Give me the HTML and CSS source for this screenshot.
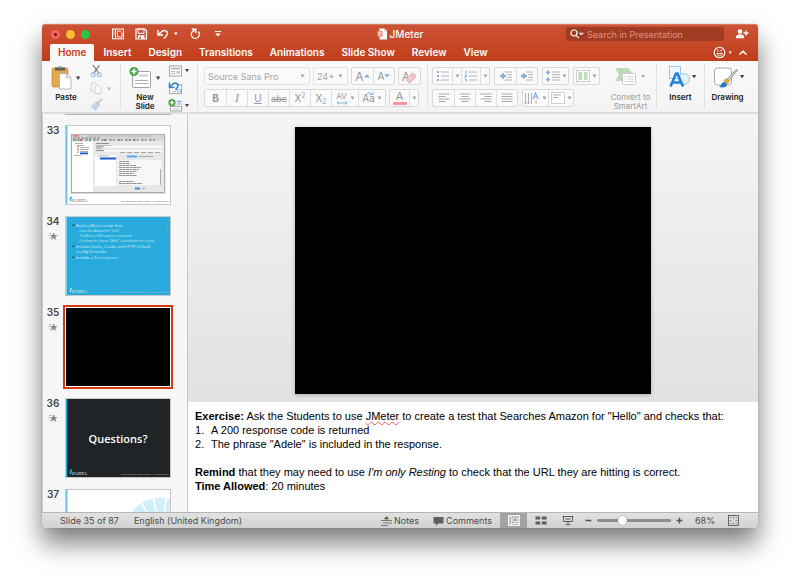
FILE: index.html
```html
<!DOCTYPE html>
<html lang="en">
<head>
<meta charset="utf-8">
<title>JMeter</title>
<link rel="stylesheet" href="styles.css">
</head>
<body>
<svg class="defs" aria-hidden="true">
  <symbol id="caret" viewBox="0 0 5 4"><path d="M0.4 0.5h4.2L2.5 3.8z" fill="currentColor"/></symbol>
  <symbol id="star" viewBox="0 0 10 9"><path d="M5.6 0.3l1 2.7h3L7.3 4.8l.9 3.1-2.6-1.8L3 7.9l.9-3.1L2.2 3.4 4.6 3z" fill="currentColor"/><path d="M1 1.5h2.5M0.5 3.5h1.8M1.2 6h1.6" stroke="currentColor" stroke-width=".6"/></symbol>
</svg>
<div class="window">
  <header class="chrome">
    <div class="titlebar">
      <div class="title-left">
        <div class="lights">
          <button class="light red" aria-label="Close"></button>
          <button class="light yellow" aria-label="Minimise"></button>
          <button class="light green" aria-label="Zoom"></button>
        </div>
        <button class="tool" aria-label="Layout"><svg width="14" height="12"><rect x="1.5" y="1" width="11" height="9.8" fill="none" stroke="#fff"/><path d="M4.5 1v10M2.5 3h1M2.5 5h1M2.5 7h1" stroke="#fff"/><path d="M6.5 3h2.8l1.7 1.7V9H6.5z" fill="none" stroke="#fff" stroke-width=".9"/></svg></button>
        <button class="tool" aria-label="Save"><svg width="14" height="12"><path d="M2 1h9l1.5 1.5V11H2z" fill="none" stroke="#fff" stroke-width="1.2"/><path d="M4 1h6v4.3H4z" fill="none" stroke="#fff"/><path d="M4 7.2h6.5V11H4z" fill="#fff"/><path d="M5.5 8.5h1.3V11H5.500z" fill="#c24a2a"/></svg></button>
        <button class="tool undo" aria-label="Undo"><svg width="22" height="12"><path d="M1 2v5h5M1.3 6.700L4.800 3.500c2-1.800 5.500-1 5.700 1.800 0 2-1.500 3-3.700 5.200" fill="none" stroke="#fff" stroke-width="1.400"/><path d="M17 4.500h3.700l-1.800 2.800z" fill="#fff"/></svg></button>
        <button class="tool" aria-label="Redo"><svg width="14" height="12"><path d="M10.200 3.600a4 4 0 1 1-6 .3L7.400 1.600" fill="none" stroke="#fff" stroke-width="1.400"/><path d="M3.800 1.300h4v4" fill="none" stroke="#fff" stroke-width="1.400"/></svg></button>
        <button class="tool" aria-label="Customise toolbar"><svg width="14" height="12"><path d="M4 3.500h6" stroke="#fff"/><path d="M4.200 5.500h5.600L7 8.500z" fill="#fff"/></svg></button>
      </div>
      <h1 class="title"><svg width="11" height="12"><path d="M2.500.5h5L10 3v8.500H2.500z" fill="#fff"/><path d="M7.500.5V3H10" fill="none" stroke="#d0a090" stroke-width=".6"/><rect x="0" y="3" width="5.500" height="5.500" fill="#e9866e"/><path d="M2 8V4.200h1.200a1 1 0 0 1 0 2.100H2" fill="none" stroke="#fff" stroke-width=".8"/></svg>JMeter</h1>
      <div class="title-right">
        <label class="search"><svg width="15" height="12"><circle cx="5" cy="5" r="3" fill="none" stroke="#fff" stroke-width="1.200"/><path d="M7.200 7.300l2.700 2.900M10.500 4.800l1.800 1.600 1.800-1.600" fill="none" stroke="#fff" stroke-width="1.200"/></svg><input type="search" placeholder="Search in Presentation" aria-label="Search in Presentation"></label>
        <button class="tool share" aria-label="Share"><svg width="14" height="12"><circle cx="5" cy="3.500" r="2.300" fill="#fff"/><path d="M.8 10.200c0-3 1.500-4 4.200-4s4.200 1 4.200 4z" fill="#fff"/><path d="M11 2.500v5M8.500 5h5" stroke="#fff" stroke-width="1.300"/></svg></button>
      </div>
    </div>
    <nav class="tabs">
      <button class="tab active">Home</button>
      <button class="tab">Insert</button>
      <button class="tab">Design</button>
      <button class="tab">Transitions</button>
      <button class="tab">Animations</button>
      <button class="tab">Slide Show</button>
      <button class="tab">Review</button>
      <button class="tab">View</button>
      <button class="tool feedback" aria-label="Feedback"><svg width="20" height="13"><circle cx="6.500" cy="6.500" r="5.300" fill="none" stroke="#fff" stroke-width="1.100"/><path d="M3.800 7.500h5.400c-.5 3.200-4.900 3.200-5.400 0M4.800 3.500v2M8.200 3.500v2" fill="none" stroke="#fff"/><path d="M15.500 5.500H19l-1.700 2.500z" fill="#fff"/></svg></button>
      <button class="tool collapse" aria-label="Collapse ribbon"><svg width="10" height="13"><path d="M1.500 8.500L5 5.300l3.500 3.200" fill="none" stroke="#fff" stroke-width="1.600"/></svg></button>
    </nav>
  </header>

  <section class="ribbon" aria-label="Home ribbon">
    <div class="group clipboard">
      <button class="big"><svg width="32" height="26"><rect x="2" y="4" width="16" height="19" rx="1.500" fill="#e3a851" stroke="#c98e3d" stroke-width=".7"/><path d="M5 5.500V3.500h3a2.200 2.200 0 0 1 4.200 0h3v3H5z" fill="#5d6063"/><circle cx="10" cy="3.300" r=".8" fill="#fff"/><path d="M9.500 9.500h7l4.500 4.200V25H9.500z" fill="#fff" stroke="#a5a9ad" stroke-width=".8"/><path d="M16.500 9.500v4.200H21" fill="#eee" stroke="#a5a9ad" stroke-width=".8"/><path d="M26 12.500h4.200L28.100 16z" fill="#444"/></svg><span>Paste</span></button>
      <div class="stack">
        <button aria-label="Cut"><svg width="24" height="14"><path d="M3 1l6 8.500M9.500 1l-6 8.500" stroke="#74787c" stroke-width="1.300"/><circle cx="3.200" cy="10.600" r="2" fill="none" stroke="#9cbfe4" stroke-width="1.200"/><circle cx="9.300" cy="10.600" r="2" fill="none" stroke="#9cbfe4" stroke-width="1.200"/></svg></button>
        <button aria-label="Copy"><svg width="24" height="14"><path d="M1.500 2h4l2 2v6.500h-6z" fill="#fafafa" stroke="#d2d2d2"/><path d="M5 4.500h3.500L11 7v5.500H5z" fill="#fafafa" stroke="#d2d2d2"/><path d="M17 6.500h4L19 9.500z" fill="#b8b8b8"/></svg></button>
        <button aria-label="Format painter"><svg width="24" height="14"><path d="M12 1L7.500 5.500" stroke="#c9cdd0" stroke-width="2.400"/><path d="M5.500 4l4 4" stroke="#bfc3c6" stroke-width="2"/><path d="M4.500 5l4.200 4.200L5.500 13 .8 8.200z" fill="#bdd5ea"/></svg></button>
      </div>
    </div>
    <div class="group slides">
      <button class="big"><svg width="34" height="26"><rect x="4.500" y="7.500" width="18" height="16" rx=".8" fill="#fff" stroke="#9da3a8"/><path d="M7 16.500h13M7 19.500h13" stroke="#a9b2bd" stroke-width="1.200"/><path d="M11 11.500h9" stroke="#ccd0d4" stroke-width="2"/><circle cx="6" cy="7.500" r="4.600" fill="#4aa74b"/><path d="M6 4.800v5.400M3.300 7.500h5.400" stroke="#fff" stroke-width="1.500"/><path d="M28 12.500h4.200L30.100 16z" fill="#444"/></svg><span>New<br>Slide</span></button>
      <div class="stack">
        <button aria-label="Layout"><svg width="22" height="14"><rect x="1.500" y="2" width="12" height="10" fill="#fff" stroke="#a1a7ac"/><path d="M3 4.500h9" stroke="#a9afb5" stroke-width="1.600"/><path d="M3 7.500h4M3 9.500h4" stroke="#b8bdc2"/><path d="M8.500 7h3.500v3H8.500z" fill="#c8ccd0"/><path d="M17 5h4l-2 3.200z" fill="#444"/></svg></button>
        <button aria-label="Reset"><svg width="22" height="14"><path d="M8 3.500h5.500v9h-12V8" fill="#fff" stroke="#a1a7ac"/><path d="M4 10.500h4M9.500 8.500h3v2.500h-3z" stroke="#b5bac0" fill="none"/><path d="M1.500 1.500v5h5M2 6l3-3C7.500 1 11.500 3 9.500 6.300L7.500 9" fill="none" stroke="#2f7fcb" stroke-width="1.500"/></svg></button>
        <button aria-label="Section"><svg width="22" height="14"><path d="M9 3.500h4.500" stroke="#7fa9d6" stroke-width="1.300"/><path d="M9 6h4.500" stroke="#7fa9d6"/><rect x="2.500" y="8.500" width="11" height="4.500" fill="#fff" stroke="#a1a7ac"/><path d="M4.500 11h7" stroke="#b5bac0"/><circle cx="4" cy="4.700" r="3.600" fill="#4aa74b"/><path d="M4 2.600v4.200M1.900 4.700h4.200" stroke="#fff" stroke-width="1.200"/><path d="M17 6h4l-2 3.200z" fill="#444"/></svg></button>
      </div>
    </div>
    <div class="group font disabled">
      <div class="row">
        <div class="combo name"><select aria-label="Font"><option>Source Sans Pro</option></select><svg class="caret"><use href="#caret"/></svg></div>
        <div class="combo size"><select aria-label="Font size"><option>24+</option></select><svg class="caret"><use href="#caret"/></svg></div>
        <div class="segments">
          <button class="w22 letter">A<svg width="6" height="4"><path d="M0 3.500h6L3 .3z" fill="#86aed8"/></svg></button>
          <button class="w22 letter small">A<svg width="6" height="4"><path d="M0 .3h6L3 3.500z" fill="#86aed8"/></svg></button>
        </div>
        <div class="segments"><button class="w22 letter" aria-label="Clear formatting">A<svg class="eraser" width="12" height="12"><path d="M6.500 1.500q1-1 2 0l2 2q1 1 0 2L5.500 10.500q-1 1-2 0l-2-2q-1-1 0-2z" fill="#eec3cb" stroke="#d9a9b2" stroke-width=".8"/><path d="M3.500 4.500l4 4" stroke="#f8e6e9"/></svg></button></div>
      </div>
      <div class="row">
        <div class="segments">
          <button class="w22"><b>B</b></button>
          <button class="w22"><i class="serif">I</i></button>
          <button class="w22"><u>U</u></button>
          <button class="w22 strike"><s>abc</s></button>
          <button class="w22">X<sup>2</sup></button>
          <button class="w22">X<sub>2</sub></button>
          <button class="w27" aria-label="Character spacing"><span class="spacing">AV<svg width="12" height="4"><path d="M1 2h10M3 .3L1 2l2 1.700M9 .3L11 2 9 3.700" fill="none" stroke="#86aed8"/></svg></span><svg class="caret"><use href="#caret"/></svg></button>
          <button class="w27">Aa<svg class="caret"><use href="#caret"/></svg><svg class="swap" width="9" height="5"><path d="M1 4C2 0 6 0 7 3M5 2.500h3V0" fill="none" stroke="#86aed8"/></svg></button>
        </div>
        <div class="segments color">
          <button class="w19"><span class="ink">A</span></button>
          <button class="w9" aria-label="Font colour options"><svg class="caret"><use href="#caret"/></svg></button>
        </div>
      </div>
    </div>
    <div class="group paragraph disabled">
      <div class="row">
        <div class="segments">
          <button class="w19" aria-label="Bullets"><svg width="14" height="12"><path d="M5 2h8M5 6h8M5 10h8" stroke="#b4b4b4"/><path d="M1 2h2M1 6h2M1 10h2" stroke="#86aed8" stroke-width="2"/></svg></button>
          <button class="w9" aria-label="Bullet options"><svg class="caret"><use href="#caret"/></svg></button>
          <button class="w19" aria-label="Numbering"><svg width="14" height="12"><path d="M5 2h8M5 6h8M5 10h8" stroke="#b4b4b4"/><path d="M2 .5v3M1 5h1.500v1.500H1V8M1 9.500h1.500V12" fill="none" stroke="#86aed8"/></svg></button>
          <button class="w9" aria-label="Numbering options"><svg class="caret"><use href="#caret"/></svg></button>
        </div>
        <div class="segments">
          <button class="w22" aria-label="Decrease indent"><svg width="14" height="12"><path d="M6 2h7M8 4.700h5M8 7.300h5M6 10h7" stroke="#b4b4b4"/><path d="M.5 6L5 2.500v2.300h2v2.400H5v2.300z" fill="#86aed8"/></svg></button>
          <button class="w22" aria-label="Increase indent"><svg width="14" height="12"><path d="M6 2h7M8 4.700h5M8 7.300h5M6 10h7" stroke="#b4b4b4"/><path d="M7.500 6L3 2.500v2.300H1v2.400h2v2.300z" fill="#86aed8"/></svg></button>
        </div>
        <div class="segments"><button class="w25" aria-label="Line spacing"><svg width="15" height="12"><path d="M7 2h8M7 4.700h8M7 7.300h8M7 10h8" stroke="#b4b4b4"/><path d="M3 0l2.500 3H4v1.500H2V3H.5zM3 12L.5 9H2V7.500h2V9h1.500z" fill="#86aed8"/></svg><svg class="caret"><use href="#caret"/></svg></button></div>
        <div class="segments"><button class="w25" aria-label="Columns"><svg width="14" height="12"><rect x=".5" y=".5" width="13" height="11" fill="#fff" stroke="#cdcdcd"/><path d="M2.500 2h3.500v8H2.500zM8 2h3.500v8H8z" fill="#bfdcba"/></svg><svg class="caret"><use href="#caret"/></svg></button></div>
      </div>
      <div class="row">
        <div class="segments">
          <button class="w22" aria-label="Align left"><svg width="12" height="10"><path d="M.5 1h11M.5 3.500h7M.5 6h11M.5 8.500h7" stroke="#a9a9a9"/></svg></button>
          <button class="w22" aria-label="Centre"><svg width="12" height="10"><path d="M.5 1h11M2.500 3.500h7M.5 6h11M2.500 8.500h7" stroke="#a9a9a9"/></svg></button>
          <button class="w22" aria-label="Align right"><svg width="12" height="10"><path d="M.5 1h11M4.500 3.500h7M.5 6h11M4.500 8.500h7" stroke="#a9a9a9"/></svg></button>
          <button class="w22" aria-label="Justify"><svg width="12" height="10"><path d="M.5 1h11M.5 3.500h11M.5 6h11M.5 8.500h11" stroke="#a9a9a9"/></svg></button>
        </div>
        <div class="segments">
          <button class="w25" aria-label="Text direction"><svg width="16" height="13"><path d="M1.500 1v11M4.500 1v11M7.500 1v11M12 8v4" stroke="#b0b0b0"/><path d="M.3 10.500l1.200 1.500 1.200-1.500M3.300 10.500l1.200 1.500 1.200-1.500" fill="none" stroke="#b0b0b0" stroke-width=".7"/><path d="M9 7L11.500 1 14 7M10 5h3" fill="none" stroke="#86aed8" stroke-width="1.200"/></svg><svg class="caret"><use href="#caret"/></svg></button>
          <button class="w25" aria-label="Align text"><svg width="14" height="12"><rect x=".5" y=".5" width="13" height="11" fill="#fff" stroke="#cdcdcd"/><path d="M2 3h8M2 5.500h5" stroke="#b0b0b0"/></svg><svg class="caret"><use href="#caret"/></svg></button>
        </div>
      </div>
    </div>
    <div class="group convert">
      <button class="big muted"><svg width="34" height="26"><path d="M1 4h13l6 6.500-4 6.500H1l4-6.500z" fill="#bedcb9"/><rect x="8.500" y="9.500" width="13" height="11" rx=".8" fill="#fff" stroke="#c7cbce"/><path d="M10.500 12.500h1M10.500 15h1M10.500 17.500h1M13 12.500h6.500M13 15h6.500M13 17.500h6.500" stroke="#c9ccd0"/><path d="M27 11h4.200L29.100 14.500z" fill="#b4b4b4"/></svg><span>Convert to<br>SmartArt</span></button>
    </div>
    <div class="group insert">
      <button class="big"><svg width="34" height="26"><rect x="5.500" y="2.500" width="11" height="12" fill="#eef6fd" stroke="#9cc7ec"/><circle cx="20" cy="15" r="5.500" fill="#e3f1fc" stroke="#9cc7ec"/><path d="M6.500 22.500L12 9.500h1.500l5.500 13M8.700 18.500h8" fill="none" stroke="#2483d6" stroke-width="2.600"/><path d="M28 11h4.200L30.100 14.500z" fill="#444"/></svg><span>Insert</span></button>
    </div>
    <div class="group drawing">
      <button class="big"><svg width="34" height="26"><rect x="3.500" y="4" width="17" height="17" rx="3" fill="#fff" stroke="#a6abb0"/><path d="M26.500 6l-9 11.500-2-2L25.500 5.500z" fill="#d5d8da" stroke="#868b90" stroke-width=".9"/><circle cx="15.500" cy="17.500" r="2.800" fill="#dfa34e"/><path d="M8 22.800c2.500-.5 1.500-4.300 5.500-4.800l2.700 2.700c-1 3-5 3.300-8.200 2.100z" fill="#2876bd"/><path d="M29 11h4.200L31.100 14.500z" fill="#444"/></svg><span>Drawing</span></button>
    </div>
  </section>

  <main class="workspace">
    <aside class="slides-pane">
      <div class="previous-edge"></div>
      <ol class="thumbs">
        <li><div class="meta">33</div>
          <button class="thumb" aria-label="Slide 33"><svg viewBox="0 0 104 78">
            <rect width="104" height="78" fill="#fff"/><rect width="1.500" height="78" fill="#6cc5ea"/>
            <rect x="4.500" y="9.500" width="95" height="58.500" fill="#aaa" opacity=".45"/><rect x="5.500" y="8.500" width="93" height="58" fill="#e8e8e8" stroke="#888" stroke-width=".6"/>
            <rect x="6" y="9" width="92" height="5.500" fill="#d6d6d6"/><path d="M7 9.800h6" stroke="#e2766b" stroke-width="1.200"/><path d="M22 10h64" stroke="#aaa" stroke-width=".7" stroke-dasharray="3 .6"/>
            <path d="M7 12h28" stroke="#777" stroke-width=".9" stroke-dasharray="3 1"/><path d="M7 14h82" stroke="#777" stroke-width="1.600" stroke-dasharray="1.500 3 2 1.500"/><path d="M9 14h72" stroke="#4aa05e" stroke-width="1.500" stroke-dasharray="1.500 13"/><path d="M14 14h72" stroke="#cc4444" stroke-width="1.500" stroke-dasharray="1.500 23"/>
            <path d="M6 16h21v50H6z" fill="#fff"/><path d="M9 17.500h8M11 19.500h7M14 21.500h9M14 23.500h9M14 25.500h8M8 29.500h7" stroke="#8c8c8c" stroke-width=".7"/><path d="M12 20v7" stroke="#d34c4c" stroke-width="1.200" stroke-dasharray="1.300 .8"/><rect x="14" y="26.500" width="8" height="1.800" fill="#1859d8"/>
            <path d="M30 17.500h13M30 20h15M30 22h6M30 24.500h12" stroke="#777" stroke-width=".8"/><path d="M38 20h59v1.500H38zM38 24h59v1.500H38z" fill="#fff"/><path d="M54 26.500h42" stroke="#888" stroke-width=".7" stroke-dasharray="5 2"/>
            <rect x="29" y="29" width="21" height="31" fill="#fff"/><path d="M32 30h11" stroke="#999" stroke-width=".7"/><rect x="34" y="31.500" width="16" height="2" fill="#1859d8"/><rect x="61" y="29.500" width="10" height="2" fill="#5aa5ee"/><path d="M73 30.500h14" stroke="#888" stroke-width=".7"/>
            <rect x="51.500" y="34" width="44" height="25" fill="#f7f7f7"/><path d="M53 35.500h10M53 37.500h11M53 39.500h17M53 41.500h22M53 43.500h20M53 45.500h18M53 47.500h15M53 49.500h18M53 55.500h15M53 57.500h23" stroke="#777" stroke-width=".8" stroke-dasharray="3 .5"/><path d="M94.500 43v16" stroke="#aaa"/><path d="M69 62.500h5" stroke="#388bea" stroke-width="2"/><path d="M76 62.500h3" stroke="#aaa"/>
            <path d="M5 75a2.500 2.500 0 0 1 1-4" stroke="#27aee0" stroke-width="1.500" fill="none"/><text x="6" y="76" class="logo dark">PARTA</text><text x="55" y="76" class="fine dark">Copyright Sparta Global Limited. All rights reserved</text>
          </svg></button></li>
        <li><div class="meta">34<svg class="star"><use href="#star"/></svg></div>
          <button class="thumb" aria-label="Slide 34"><svg viewBox="0 0 104 78">
            <rect width="104" height="78" fill="#28abdc"/><rect width="1" height="78" fill="#7cd0ee"/>
            <path d="M6 8l1 1 1.500-2M6 29l1 1 1.500-2M6 40l1 1 1.500-2" fill="none" stroke="#174a5e" stroke-width=".9"/>
            <g class="lines"><text x="10" y="9.500">Build a JMeter script that:</text><text x="10" y="30.500">Include Cache, Cookie and HTTP Default</text><text x="10" y="35.500">Config Elements</text><text x="10" y="42">Include a Tree Listener</text></g>
            <g class="sub"><text x="12" y="14.500">– Searches Amazon for “Hello”</text><text x="12" y="19.500">– Confirms a 200 response is returned</text><text x="12" y="24.500">– Confirms the phrase “Adele” is included in the results.</text></g>
            <text transform="translate(101 16) rotate(-90)" class="fine">EXERCISE</text>
            <path d="M5 75a2.500 2.500 0 0 1 1-4" stroke="#fff" fill="none"/><text x="6" y="76" class="logo">PARTA</text><text x="55" y="76" class="fine">Copyright Sparta Global Limited. All rights reserved</text>
          </svg></button></li>
        <li><div class="meta">35<svg class="star"><use href="#star"/></svg></div>
          <button class="thumb selected" aria-label="Slide 35"><svg viewBox="0 0 104 78"><rect width="104" height="78"/></svg></button></li>
        <li><div class="meta">36<svg class="star"><use href="#star"/></svg></div>
          <button class="thumb" aria-label="Slide 36"><svg viewBox="0 0 104 78">
            <rect width="104" height="78" fill="#202427"/><rect width="1.200" height="78" fill="#1eb8d4"/><text x="52" y="43.500" class="question">Questions?</text>
            <path d="M5 75a2.500 2.500 0 0 1 1-4" stroke="#27c0e0" stroke-width="1.500" fill="none"/><text x="6" y="76" class="logo">PARTA</text><text x="55" y="76" class="fine">Copyright Sparta Global Limited. All rights reserved</text>
          </svg></button></li>
        <li><div class="meta">37</div>
          <button class="thumb" aria-label="Slide 37"><svg viewBox="0 0 104 78">
            <rect width="104" height="78" fill="#fff"/><rect width="1.500" height="78" fill="#6cc5ea"/>
            <circle cx="95" cy="45" r="29" fill="none" stroke="#d1eff8" stroke-width="17" stroke-dasharray="8.600 1.500"/>
          </svg></button></li>
      </ol>
    </aside>
    <div class="editor">
      <div class="canvas"><div class="slide" role="img" aria-label="Current slide"></div></div>
      <article class="notes">
        <p><b>Exercise:</b> Ask the Students to use <span class="typo">JMeter</span> to create a test that Searches Amazon for "Hello" and checks that:</p>
        <ol><li>A 200 response code is returned</li><li>The phrase "Adele" is included in the response.</li></ol>
        <p class="spaced"><b>Remind</b> that they may need to use <i>I'm only Resting</i> to check that the URL they are hitting is correct.</p>
        <p><b>Time Allowed</b>: 20 minutes</p>
      </article>
    </div>
  </main>

  <footer class="status">
    <span>Slide 35 of 87</span>
    <button class="language">English (United Kingdom)</button>
    <button class="notes-toggle"><svg width="11" height="10"><path d="M3.500 3L5.500.5 7.500 3zM0 4.500h11M2 7h9M0 9.500h7" fill="#606060" stroke="#606060" stroke-width=".8"/></svg>Notes</button>
    <button class="comments"><svg width="11" height="10"><path d="M.5 1h10v6.500H5.500L3 9.700V7.500H.5z" fill="#606060"/></svg>Comments</button>
    <button class="view active" aria-label="Normal view"><svg width="12" height="11"><rect x=".7" y=".7" width="10.600" height="9.600" fill="none" stroke="#fff" stroke-width="1.200"/><path d="M3.200 1v9.500M3.200 8.300h8" stroke="#fff"/><rect x="5" y="3" width="4.500" height="3.500" fill="none" stroke="#fff" stroke-width=".9"/></svg></button>
    <button class="view" aria-label="Slide sorter"><svg width="12" height="11"><path d="M.5 1.500h4.800v3H.5zM6.800 1.500h4.800v3H6.800zM.5 6.500h4.800v3H.5zM6.800 6.500h4.800v3H6.800z" fill="#5c5c5c"/></svg></button>
    <button class="view" aria-label="Slide show"><svg width="12" height="11"><path d="M.5 1.500h11M1.500 1.500v5h9v-5M6 6.500v3M3.500 9.700h5M3.500 4h5" fill="none" stroke="#5c5c5c"/></svg></button>
    <div class="zoom">
      <button aria-label="Zoom out"><svg width="7" height="7"><path d="M.5 3.500h6" stroke="#555" stroke-width="1.400"/></svg></button>
      <input type="range" min="0" max="100" value="33" aria-label="Zoom">
      <button aria-label="Zoom in"><svg width="7" height="7"><path d="M.5 3.500h6M3.500.5v6" stroke="#555" stroke-width="1.400"/></svg></button>
    </div>
    <span class="percent">68%</span>
    <button class="fit" aria-label="Fit slide"><svg width="11" height="11"><rect x=".5" y=".5" width="10" height="10" fill="none" stroke="#666"/><path d="M5.500 1.500v2M5.500 7.500v2M1.500 5.500h2M7.500 5.500h2M2.500 3.500v-1h1M7.500 2.500h1v1M2.500 7.500v1h1M8.500 7.500v1h-1" fill="none" stroke="#777" stroke-width=".8"/></svg></button>
  </footer>
</div>
</body>
</html>
```
FILE: styles.css
```css
* { box-sizing: border-box; }
body {
  margin: 0;
  min-height: 100vh;
  padding: 24px 42px 60px;
  display: flex;
  background: #fff;
  font: 10px/13px Inter, "Liberation Sans", sans-serif;
  color: #222;
}
button, select, input { font: inherit; color: inherit; }
button { border: 0; padding: 0; background: none; }
svg { display: block; flex: none; }
.defs { position: absolute; width: 0; height: 0; }
.caret { width: 5px; height: 4px; color: #a6a6a6; }

.window {
  flex: 1;
  min-width: 0;
  height: calc(100vh - 84px);
  display: flex;
  flex-direction: column;
  overflow: hidden;
  border-radius: 4px;
  background: #f6f6f6;
  box-shadow: 0 0 1px rgba(0, 0, 0, .5), 0 15px 26px rgba(0, 0, 0, .52);
}

.chrome {
  flex: none;
  background: linear-gradient(#cc5335, #c13e1b);
  color: #fff;
  box-shadow: inset 0 1px #d77861;
}
.titlebar {
  height: 20px;
  display: grid;
  grid-template-columns: 1fr auto 1fr;
  align-items: center;
}
.title-left { display: flex; align-items: center; gap: 9px; padding-left: 9px; }
.lights { display: flex; gap: 6px; margin-right: 12px; }
.light { width: 9px; height: 9px; border-radius: 50%; }
.red { background: radial-gradient(circle, #6d1410 1px, #f9615a 2px); }
.yellow { background: #fcbd30; }
.green { background: #27c840; }
.title { margin: 0; display: flex; align-items: center; gap: 2px; font-size: 10px; font-weight: 500; }
.title-right { display: flex; align-items: center; justify-content: flex-end; gap: 11px; padding-right: 9px; }
.search {
  width: 158px;
  height: 14px;
  display: flex;
  align-items: center;
  padding-left: 3px;
  gap: 3px;
  border-radius: 2px;
  background: #a13b23;
  font-size: 9px;
}
.search input { flex: 1; min-width: 0; border: 0; padding: 0; background: none; outline: 0; }
.search input::placeholder { color: #e1917f; opacity: 1; }
.tabs { height: 17px; display: flex; align-items: stretch; gap: 1px; padding: 0 10px 0 8px; }
.tab { padding: 0 8px; font-size: 10px; font-weight: 600; }
.tab.active { background: #f9f9f9; color: #c93a18; border-radius: 2px 2px 0 0; }
.feedback { margin-left: auto; }
.collapse { margin-left: 4px; }
.tabs .tool { align-self: center; }

.ribbon {
  flex: none;
  height: 53px;
  display: flex;
  background: linear-gradient(#fafafa, #f3f3f3);
  border-bottom: 2px solid #dcdcdc;
}
.group { display: flex; margin: 3px 0; border-right: 1px solid #e1e1e1; }
.clipboard { width: 79px; padding-left: 8px; gap: 8px; }
.slides { width: 77px; padding-left: 7px; gap: 6px; }
.stack { display: flex; flex-direction: column; gap: 3px; }
.big { display: flex; flex-direction: column; align-items: center; justify-content: flex-start; gap: 3px; font-size: 8px; line-height: 9px; font-weight: 600; }
.muted { color: #999; font-weight: 400; }
.font, .paragraph { flex-direction: column; gap: 4px; padding: 3px 0 0 6px; }
.font { width: 230px; }
.paragraph { width: 170px; border: 0; padding-left: 4px; }
.row { display: flex; gap: 3px; height: 18px; }
.paragraph .row { gap: 4px; }
.segments, .combo { display: flex; border: 1px solid #d9d9d9; border-radius: 2px; background: #fafafa; }
.segments button { display: flex; align-items: center; justify-content: center; position: relative; gap: 2px; color: #969696; }
.segments button + button { border-left: 1px solid #dfdfdf; }
.combo { align-items: center; padding: 0 4px 0 3px; border-color: #e3e3e3; color: #a4a4a4; font-size: 9px; }
.combo select { flex: 1; min-width: 0; border: 0; padding: 0; background: none; appearance: none; }
.name { width: 106px; }
.size { width: 35px; }
.w9 { width: 9px; }
.w19 { width: 19px; }
.w22 { width: 21px; }
.w25 { width: 25px; }
.w27 { width: 27px; }
.letter { font-size: 12px; }
.segments .letter { gap: 0; }
.letter.small { font-size: 10px; }
.eraser { margin-left: -5px; margin-top: 3px; }
.serif { font-family: "Liberation Serif", serif; font-size: 12px; }
.strike { font-size: 9px; }
sup, sub { font-size: 7px; line-height: 7px; color: #86aed8; }
.segments sup { margin: -6px 0 0 -2px; }
.segments sub { margin: 6px 0 0 -2px; }
.spacing { display: flex; flex-direction: column; align-items: center; font-size: 8px; line-height: 9px; }
.swap { position: absolute; left: 6px; top: 2px; }
.ink { width: 14px; line-height: 11px; font-size: 11px; border-bottom: 3px solid #f3959b; }
.convert { flex: 1; justify-content: center; padding-left: 7px; }
.insert, .drawing { width: 48px; justify-content: center; }
.drawing { width: 53px; border: 0; padding-right: 8px; }

.workspace { flex: 1; min-height: 0; display: flex; }
.slides-pane { width: 146px; flex: none; overflow: hidden; background: #f6f6f6; border-left: 1px solid #ccc; border-right: 1px solid #c9c9c9; }
.previous-edge { width: 106px; height: 1px; margin: 0 0 10px 22px; background: #b5b5b5; }
.thumbs { list-style: none; margin: 0; padding: 0 0 0 3px; display: flex; flex-direction: column; gap: 11px; }
.thumbs li { display: flex; gap: 5px; }
.meta { width: 14px; display: flex; flex-direction: column; align-items: center; gap: 6px; font-weight: 600; line-height: 10px; color: #444; }
.star { width: 10px; height: 9px; color: #858585; }
.thumb { width: 106px; height: 80px; border: 1px solid #c8c8c8; background: #fff; }
.thumb svg { width: 104px; height: 78px; }
.thumb.selected { outline: 2px solid #d63a13; border-color: #fff; }
.lines { font: 4px "Open Sans", sans-serif; fill: #d9f1fa; }
.sub { font: 3px "Open Sans", sans-serif; fill: #c9ebf7; }
.fine { font: 2px "Open Sans", sans-serif; fill: #bbb; }
.logo { font: 5px "Liberation Serif", serif; fill: #eee; }
.dark { fill: #555; }
.question { font: 600 11px "Open Sans", sans-serif; fill: #fff; text-anchor: middle; }

.editor { flex: 1; min-width: 0; display: flex; flex-direction: column; }
.canvas { flex: 1; min-height: 0; padding: 13px 0 8px; display: flex; justify-content: center; background: linear-gradient(#f5f5f5, #e1e1e1); }
.slide { height: 100%; aspect-ratio: 4 / 3; background: #000; box-shadow: 0 1px 4px rgba(0, 0, 0, .25); }
.notes { height: 110px; flex: none; padding: 7px; background: #fff; color: #000; font: 11px/14px "Liberation Sans", Arial, sans-serif; }
.notes p, .notes ol { margin: 0; }
.notes ol { padding-left: 16px; list-style: none; counter-reset: item; }
.notes li { counter-increment: item; }
.notes li::before { content: counter(item) "."; display: inline-block; width: 16px; margin-left: -16px; }
.notes .spaced { margin-top: 14px; }
.typo { text-decoration: underline wavy #e55 1px; text-underline-offset: 1px; }

.status { flex: none; height: 16px; display: flex; align-items: center; padding-left: 18px; border-top: 1px solid #b5b5b5; background: linear-gradient(#e2e2e2, #d2d2d2); color: #4c4c4c; font-size: 9px; white-space: nowrap; }
.status button { display: flex; align-items: center; justify-content: center; gap: 2px; }
.language { margin-left: 15px; }
.notes-toggle { margin-left: auto; }
.comments { margin: 0 8px 0 14px; }
.view { width: 27px; align-self: stretch; }
.view.active { background: #a3a3a3; }
.zoom { display: flex; align-items: center; gap: 5px; margin-left: 4px; }
.zoom input { width: 74px; height: 10px; margin: 0; appearance: none; background: none; }
.zoom input::-webkit-slider-runnable-track { height: 3px; border-radius: 2px; background: #8f8f8f; }
.zoom input::-webkit-slider-thumb { appearance: none; width: 9px; height: 9px; margin-top: -3px; border-radius: 50%; background: #fff; box-shadow: 0 0 1px #555; }
.percent { margin: 0 13px 0 12px; }
.fit { margin-right: 19px; }
```
